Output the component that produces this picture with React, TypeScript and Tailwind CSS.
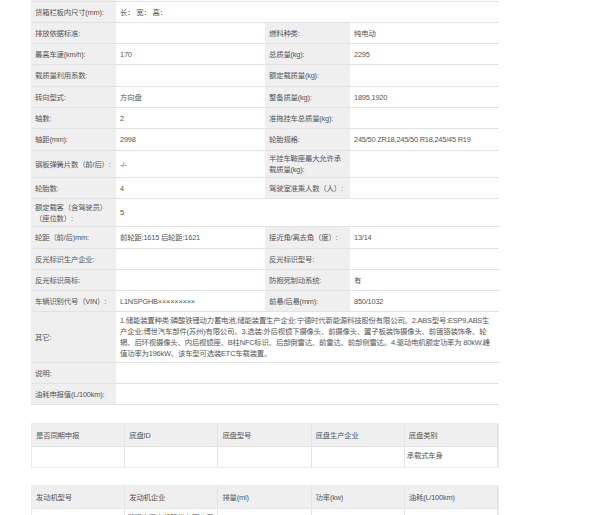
import React from "react";

type R = { h: number; a: string; b?: string; c?: string; d?: string; full?: boolean; wa?: boolean; wc?: boolean };
const rows: R[] = [
  { h: 21, a: "货箱栏板内尺寸(mm):", b: "长：  宽：  高：", full: true },
  { h: 21, a: "排放依据标准:", b: "", c: "燃料种类:", d: "纯电动" },
  { h: 21, a: "最高车速(km/h):", b: "170", c: "总质量(kg):", d: "2295" },
  { h: 22, a: "载质量利用系数:", b: "", c: "额定载质量(kg):", d: "" },
  { h: 21, a: "转向型式:", b: "方向盘", c: "整备质量(kg):", d: "1895,1920" },
  { h: 21, a: "轴数:", b: "2", c: "准拖挂车总质量(kg):", d: "" },
  { h: 22, a: "轴距(mm):", b: "2998", c: "轮胎规格:", d: "245/50 ZR18,245/50 R18,245/45 R19" },
  { h: 27, a: "钢板弹簧片数（前/后）:", b: "-/-", c: "半挂车鞍座最大允许承载质量(kg):", d: "", wc: true },
  { h: 21, a: "轮胎数:", b: "4", c: "驾驶室准乘人数（人）:", d: "" },
  { h: 28, a: "额定载客（含驾驶员）（座位数）:", b: "5", full: true, wa: true },
  { h: 22, a: "轮距（前/后)mm:", b: "前轮距:1615 后轮距:1621", c: "接近角/离去角（度）:", d: "13/14" },
  { h: 21, a: "反光标识生产企业:", b: "", c: "反光标识型号:", d: "" },
  { h: 21, a: "反光标识商标:", b: "", c: "防抱死制动系统:", d: "有" },
  { h: 21, a: "车辆识别代号（VIN）:", b: "L1NSPGHB×××××××××", c: "前悬/后悬(mm):", d: "850/1032" },
  {
    h: 51,
    a: "其它:",
    b: "1.储能装置种类:磷酸铁锂动力蓄电池,储能装置生产企业:宁德时代新能源科技股份有限公司。2.ABS型号:ESP9,ABS生产企业:博世汽车部件(苏州)有限公司。3.选装:外后视镜下摄像头、前摄像头、翼子板装饰摄像头、前镀铬装饰条、轮辋、后环视摄像头、内后视镜座、B柱NFC标识、后部倒雷达、前雷达、前部侧雷达。4.驱动电机额定功率为 80kW,峰值功率为196kW。该车型可选装ETC车载装置。",
    full: true,
  },
  { h: 21, a: "说明:", b: "", full: true },
  { h: 21, a: "油耗申报值(L/100km):", b: "", full: true },
];

const base = "flex items-center px-[4px] border-b border-[#e2e2e2] overflow-hidden ";
const lbl = base + "bg-[#efefef] ";
const val = base + "bg-white ";

function Small({ head, body }: { head: string[]; body: string[] }) {
  return (
    <div className="grid grid-cols-5 border border-[#ececec]">
      {head.map((t, i) => (
        <div key={i} className="bg-[#efefef] h-[22px] flex items-center px-[4px] border-r border-[#e4e4e4]">{t}</div>
      ))}
      {body.map((t, i) => (
        <div key={i} className="bg-white h-[21px] flex items-start pt-[3px] px-[2px] border-r border-t border-[#e4e4e4] whitespace-nowrap overflow-hidden">{t}</div>
      ))}
    </div>
  );
}

export default function App() {
  return (
    <div
      className="w-[600px] h-[515px] overflow-hidden bg-white text-[#555] text-[7.4px] leading-[11px] tracking-[-0.2px]"
      style={{ fontFamily: '"Liberation Sans","Noto Sans CJK SC",sans-serif' }}
    >
      <div className="ml-[31px] w-[468px]">
        <div className="h-[2px] border-b border-[#e2e2e2] flex">
          <div className="w-[85px] bg-[#efefef]" />
        </div>
        <div className="grid grid-cols-[85px_149px_85px_149px] border-r border-[#ececec]">
          {rows.map((r, i) =>
            r.full ? (
              <React.Fragment key={i}>
                <div className={lbl + (r.wa ? "" : "whitespace-nowrap")} style={{ height: r.h }}>{r.a}</div>
                <div className={val + "col-span-3 " + (r.h > 40 ? "" : "whitespace-nowrap")} style={{ height: r.h }}>{r.b}</div>
              </React.Fragment>
            ) : (
              <React.Fragment key={i}>
                <div className={lbl + "whitespace-nowrap"} style={{ height: r.h }}>{r.a}</div>
                <div className={val + "whitespace-nowrap"} style={{ height: r.h }}>{r.b}</div>
                <div className={lbl + (r.wc ? "" : "whitespace-nowrap")} style={{ height: r.h }}>{r.c}</div>
                <div className={val + "whitespace-nowrap"} style={{ height: r.h }}>{r.d}</div>
              </React.Fragment>
            )
          )}
        </div>
        <div className="mt-[18px]">
          <Small head={["是否同期申报", "底盘ID", "底盘型号", "底盘生产企业", "底盘类别"]} body={["", "", "", "", "承载式车身"]} />
        </div>
        <div className="mt-[17px]">
          <Small
            head={["发动机型号", "发动机企业", "排量(ml)", "功率(kw)", "油耗(L/100km)"]}
            body={["TZ220XSFDM80;TZ220XSZ", "浙江方正电机股份有限公司;", "", "", ""]}
          />
        </div>
      </div>
    </div>
  );
}
